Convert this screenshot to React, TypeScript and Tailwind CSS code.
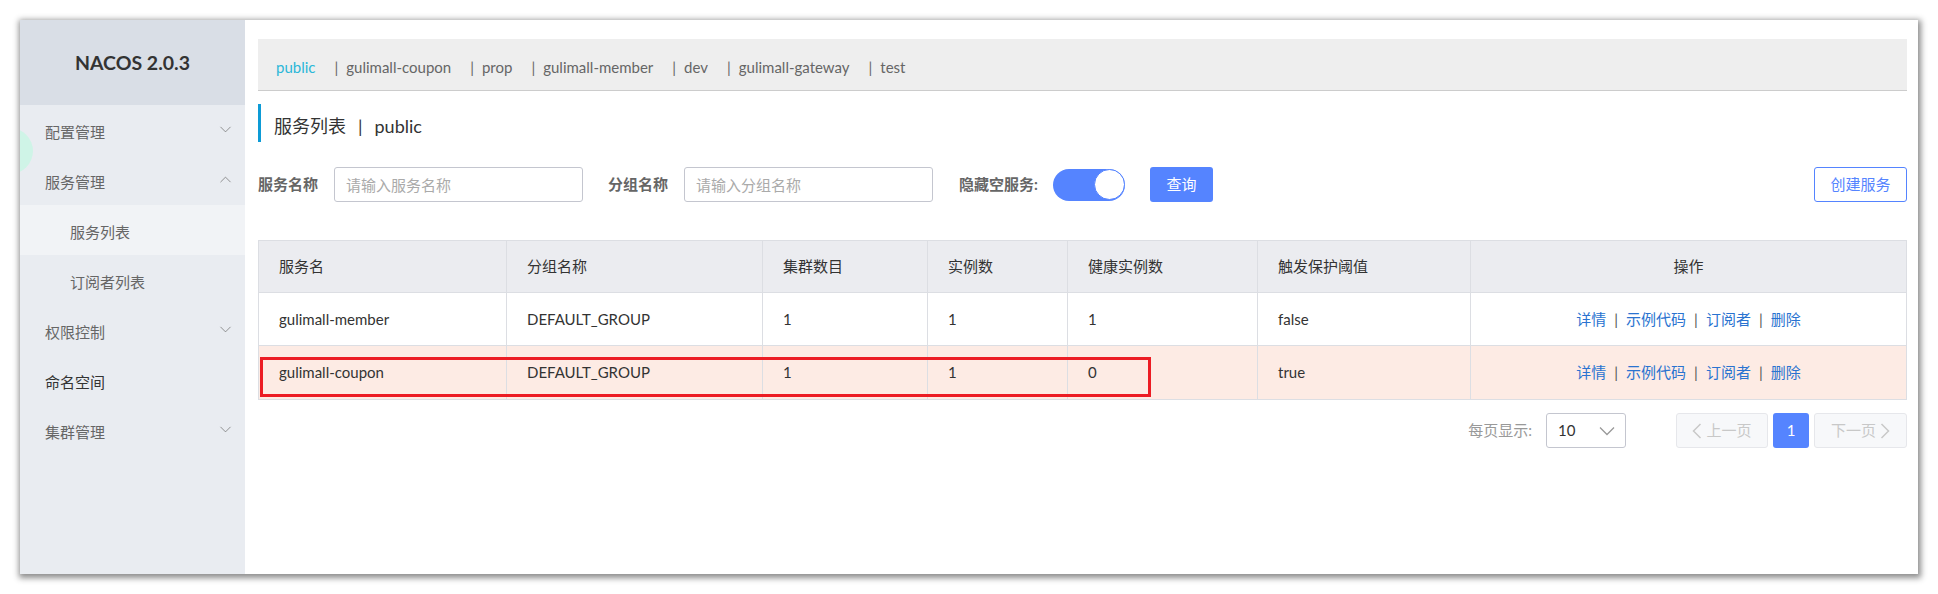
import { ChevronDown, ChevronUp } from "lucide-react";

const namespaces = ["public", "gulimall-coupon", "prop", "gulimall-member", "dev", "gulimall-gateway", "test"];

const rows = [
  { name: "gulimall-member", group: "DEFAULT_GROUP", clusters: "1", instances: "1", healthy: "1", threshold: "false", hl: false },
  { name: "gulimall-coupon", group: "DEFAULT_GROUP", clusters: "1", instances: "1", healthy: "0", threshold: "true", hl: true },
];

const cols = "grid grid-cols-[248px_256px_165px_140px_190px_213px_1fr]";

const MenuItem = ({ label, open, dark }: { label: string; open?: boolean | null; dark?: boolean }) => (
  <div className="h-[50px] flex items-center justify-between pl-[25px] pr-[10px] pt-[5px]">
    <span className={dark ? "text-[15px] text-[#333]" : "text-[15px] text-[#666]"}>{label}</span>
    {open === true && <ChevronUp size={19} strokeWidth={1} className="text-[#777] -mt-[6px]" />}
    {open === false && <ChevronDown size={19} strokeWidth={1} className="text-[#777] -mt-[6px]" />}
  </div>
);

const Actions = () => (
  <div className="flex items-center justify-center text-[15px]">
    <span className="text-[#2a73d0]">详情</span>
    <span className="mx-[8px] text-[#555]">|</span>
    <span className="text-[#2a73d0]">示例代码</span>
    <span className="mx-[8px] text-[#555]">|</span>
    <span className="text-[#2a73d0]">订阅者</span>
    <span className="mx-[8px] text-[#555]">|</span>
    <span className="text-[#2a73d0]">删除</span>
  </div>
);

export default function App() {
  return (
    <div className="w-[1938px] h-[594px] bg-white pt-[20px] pl-[20px] [font-family:Lato,'Noto_Sans_CJK_SC',sans-serif]">
      <div className="flex w-[1898px] h-[554px] bg-white shadow-[1px_2px_6px_2px_rgba(0,0,0,0.45)]">
        {/* sidebar */}
        <div className="relative w-[225px] shrink-0 bg-[#e9ecf1] overflow-hidden">
          <div className="h-[85px] bg-[#d9dee6] flex items-center justify-center text-[19.5px] font-bold text-[#333]">
            NACOS 2.0.3
          </div>
          <MenuItem label="配置管理" open={false} />
          <MenuItem label="服务管理" open={true} />
          <div className="h-[50px] flex items-center pl-[50px] pt-[5px] bg-[#f1f3f6] text-[15px] text-[#666]">服务列表</div>
          <div className="h-[50px] flex items-center pl-[50px] pt-[5px] text-[15px] text-[#666]">订阅者列表</div>
          <MenuItem label="权限控制" open={false} />
          <MenuItem label="命名空间" dark />
          <MenuItem label="集群管理" open={false} />
          <div className="absolute left-[-33px] top-[108px] w-[46px] h-[46px] rounded-full bg-[#cff4e7]" />
        </div>

        {/* main */}
        <div className="flex-1 pl-[13px] pr-[11px] pt-[19px]">
          <div className="h-[52px] bg-[#eeeeee] border-b border-[#cccccc] flex items-center pl-[18px] pt-[5px] text-[15px] text-[#666]">
            {namespaces.map((ns, i) => (
              <span key={ns} className="flex items-center mr-[19px]">
                {i > 0 && <span className="mr-[8px]">|</span>}
                <span className={i === 0 ? "text-[#2bb7d8]" : ""}>{ns}</span>
              </span>
            ))}
          </div>

          <div className="mt-[13px] h-[38px] border-l-[3px] border-[#0d9bd6] flex items-center pl-[13px] pt-[6px] text-[18px] text-[#333]">
            <span>服务列表</span>
            <span className="mx-[12px]">|</span>
            <span>public</span>
          </div>

          <div className="mt-[25px] h-[35px] flex items-center text-[15px]">
            <span className="font-bold text-[#666] mr-[16px]">服务名称</span>
            <input
              placeholder="请输入服务名称"
              className="w-[249px] h-[35px] border border-[#c4c6cf] rounded-[3px] px-[11px] text-[15px] outline-none placeholder:text-[#aaa]"
            />
            <span className="font-bold text-[#666] ml-[25px] mr-[16px]">分组名称</span>
            <input
              placeholder="请输入分组名称"
              className="w-[249px] h-[35px] border border-[#c4c6cf] rounded-[3px] px-[11px] text-[15px] outline-none placeholder:text-[#aaa]"
            />
            <span className="font-bold text-[#666] ml-[26px] mr-[15px]">隐藏空服务:</span>
            <div className="w-[72px] h-[32px] rounded-full bg-[#5584ff] flex items-center justify-end">
              <div className="w-[31px] h-[31px] rounded-full bg-white border border-[#5584ff]" />
            </div>
            <button className="ml-[25px] w-[63px] h-[35px] rounded-[3px] bg-[#5584ff] text-white text-[15px]">查询</button>
            <button className="ml-auto w-[93px] h-[35px] rounded-[3px] border border-[#5584ff] bg-white text-[#5584ff] text-[15px]">
              创建服务
            </button>
          </div>

          {/* table */}
          <div className="relative mt-[38px] border border-[#dcdee3] text-[15px] text-[#333]">
            <div className={`${cols} h-[52px] bg-[#ebecf0] border-b border-[#dcdee3]`}>
              {["服务名", "分组名称", "集群数目", "实例数", "健康实例数", "触发保护阈值"].map((h) => (
                <div key={h} className="flex items-center px-[20px] border-r border-[#dcdee3]">{h}</div>
              ))}
              <div className="flex items-center justify-center">操作</div>
            </div>
            {rows.map((r, idx) => (
              <div
                key={r.name}
                className={`${cols} h-[53px] ${r.hl ? "bg-[#fdebe4]" : "bg-white"} ${idx === 0 ? "border-b border-[#dcdee3]" : ""}`}
              >
                {[r.name, r.group, r.clusters, r.instances, r.healthy, r.threshold].map((v, i) => (
                  <div key={i} className="flex items-center px-[20px] border-r border-[#dcdee3]">{v}</div>
                ))}
                <Actions />
              </div>
            ))}
            <div className="absolute left-[1px] top-[116px] w-[891px] h-[40px] border-[3px] border-[#ec1c24]" />
          </div>

          {/* pagination */}
          <div className="mt-[13px] h-[35px] flex items-center justify-end text-[15px]">
            <span className="text-[#999] mr-[14px]">每页显示:</span>
            <div className="w-[80px] h-[35px] border border-[#c4c6cf] rounded-[3px] flex items-center justify-between pl-[11px] pr-[10px]">
              <span className="text-[#333]">10</span>
              <svg width="16" height="10" viewBox="0 0 16 10">
                <polyline points="1,1.5 8,8.5 15,1.5" fill="none" stroke="#999" strokeWidth="1.3" />
              </svg>
            </div>
            <div className="ml-[50px] w-[92px] h-[35px] border border-[#e6e7eb] bg-[#f7f8fa] rounded-[3px] flex items-center justify-center gap-[4px] text-[#c8c8c8]">
              <svg width="10" height="16" viewBox="0 0 10 16">
                <polyline points="8.5,1 1.5,8 8.5,15" fill="none" stroke="#c8c8c8" strokeWidth="1.5" />
              </svg>
              <span>上一页</span>
            </div>
            <div className="ml-[5px] w-[36px] h-[35px] rounded-[3px] bg-[#5584ff] text-white flex items-center justify-center">1</div>
            <div className="ml-[5px] w-[93px] h-[35px] border border-[#e6e7eb] bg-[#f7f8fa] rounded-[3px] flex items-center justify-center gap-[4px] text-[#c8c8c8]">
              <span>下一页</span>
              <svg width="10" height="16" viewBox="0 0 10 16">
                <polyline points="1.5,1 8.5,8 1.5,15" fill="none" stroke="#c8c8c8" strokeWidth="1.5" />
              </svg>
            </div>
          </div>
        </div>
      </div>
    </div>
  );
}
